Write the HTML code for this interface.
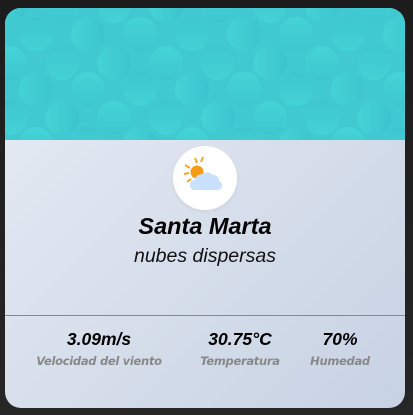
<!DOCTYPE html><html><head><style>
html,body{margin:0;width:413px;height:415px;overflow:hidden;background:linear-gradient(180deg,#1c1c1c,#262626);font-family:"Liberation Sans",sans-serif}
.card{position:absolute;left:5px;top:8px;width:400px;height:400px;border-radius:16px;overflow:hidden;background:linear-gradient(135deg,#e9edf5,#c7d2e3)}
.hdr{position:absolute;left:0;top:0;width:400px;height:132px;background:#40c9d1;overflow:hidden}
.c{position:absolute;width:34px;height:34px;border-radius:50%}
.v{background:linear-gradient(180deg,#3ec6cf,#43d2d6)}
.u{background:linear-gradient(0deg,#3ec6cf,#44d4d7)}
.h{background:linear-gradient(90deg,#44d3d6,#3dc4ce)}
.ic{position:absolute;left:168px;top:138px;width:64px;height:64px;border-radius:50%;background:#fff;box-shadow:0 2px 4px rgba(0,0,0,.05)}
.t{position:absolute;width:400px;text-align:center;left:0}
.line{position:absolute;left:0;top:307px;width:400px;height:1px;background:#888}
.s{position:absolute;text-align:center;width:160px;font-style:italic}
.s b{display:block;font-size:17.5px;color:#000}
.s span{display:block;color:#888;margin-top:4px;font-family:"DejaVu Sans",sans-serif;font-size:11.5px;font-weight:bold;letter-spacing:-.3px}
</style></head><body><div class="card"><div class="hdr" id="h"></div>
<div class="ic"><svg width="64" height="64" viewBox="0 0 64 64">
<g stroke="#f5a623" stroke-width="2"><line x1="22" y1="12" x2="24" y2="17"/><line x1="30" y1="11" x2="28" y2="16"/><line x1="12" y1="19" x2="17" y2="22"/><line x1="11" y1="28" x2="16" y2="27"/><line x1="14" y1="36" x2="18" y2="33"/></g>
<circle cx="24" cy="26" r="6.5" fill="#f59c13"/>
<path d="M22 44 Q17 44 17 39 Q17 34 22 34 Q23 28 30 28 Q35 24 40 29 Q46 29 46 35 Q50 37 49 41 Q48 44 44 44 Z" fill="#c9e0ff"/>
</svg></div>
<div class="t" style="top:205px;font-size:23.5px;font-weight:bold;font-style:italic;color:#000">Santa Marta</div>
<div class="t" style="top:237px;font-size:19.5px;font-style:italic;color:#111">nubes dispersas</div>
<div class="line"></div>
<div class="s" style="left:14px;top:321px"><b>3.09m/s</b><span>Velocidad del viento</span></div>
<div class="s" style="left:155px;top:321px"><b>30.75°C</b><span>Temperatura</span></div>
<div class="s" style="left:255px;top:321px"><b>70%</b><span>Humedad</span></div>
</div>
<script>
var h=document.getElementById('h'),s='',cls=['h','v','u'];
var rows=[[-10,0],[18,26],[47,0],[73,26],[102,0],[128,26]];
for(var r=0;r<rows.length;r++){for(var i=-1;i<9;i++){var x=rows[r][1]+i*52-12;var cl=cls[(i*2+r)%3<0?0:(i*2+r+3)%3];s+='<div class="c '+cl+'" style="left:'+x+'px;top:'+(rows[r][0]-9)+'px"></div>';}}
h.innerHTML=s;
</script></body></html>
